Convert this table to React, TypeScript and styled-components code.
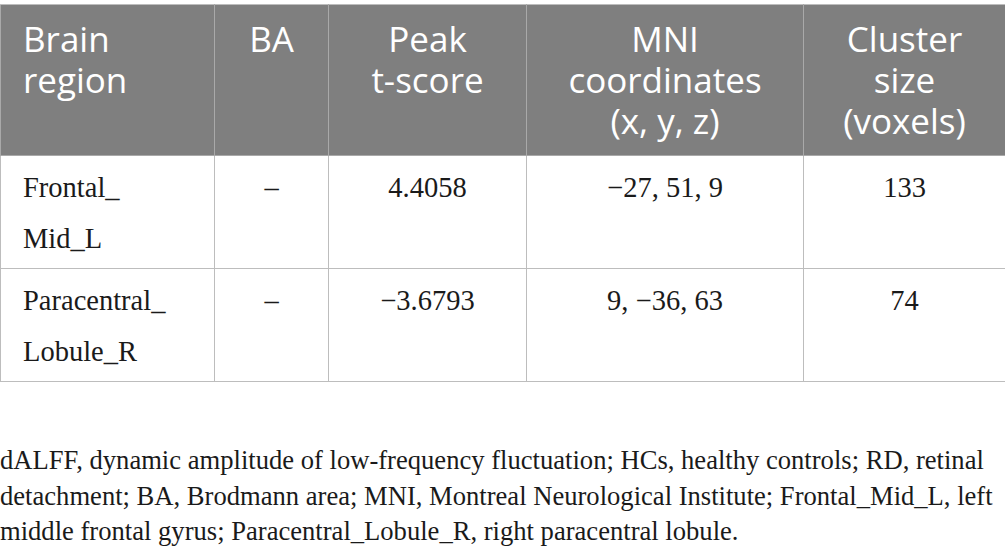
import React from 'react';
import styled, { createGlobalStyle } from 'styled-components';

const GlobalStyle = createGlobalStyle`
  html, body {
    margin: 0;
    padding: 0;
    background: #ffffff;
  }
`;

const Page = styled.div`
  width: 1005px;
  padding-top: 4px;
`;

const Table = styled.table`
  width: 1005px;
  border-collapse: collapse;
  table-layout: fixed;
  border: 1px solid #bdbdbd;
`;

const HeadCell = styled.th<{ $align?: 'left' | 'center' }>`
  background: #7f7f7f;
  color: #ffffff;
  font-family: 'Open Sans', 'Noto Sans', sans-serif;
  font-weight: 400;
  font-size: 35px;
  line-height: 41px;
  text-align: ${(p) => p.$align || 'center'};
  vertical-align: top;
  padding: 13px ${(p) => (p.$align === 'left' ? '10px 14px 22px' : '8px 14px 8px')};
  border: 1px solid #a9a9a9;
  border-top-color: #bdbdbd;
`;

const Cell = styled.td<{ $align?: 'left' | 'center' }>`
  font-family: 'Liberation Serif', 'Times New Roman', serif;
  font-size: 28.5px;
  line-height: 51px;
  color: #1a1a1a;
  text-align: ${(p) => p.$align || 'center'};
  vertical-align: top;
  padding: ${(p) => (p.$align === 'left' ? '6px 10px 4px 22px' : '6px 8px 4px')};
  border: 1px solid #bdbdbd;
  height: 102px;
`;

const Caption = styled.p`
  margin: 61px 0 0;
  font-family: 'Liberation Serif', 'Times New Roman', serif;
  font-size: 26.6px;
  line-height: 35.5px;
  color: #1a1a1a;
`;

const rows = [
  { region: ['Frontal_', 'Mid_L'], ba: '–', t: '4.4058', mni: '−27, 51, 9', size: '133' },
  { region: ['Paracentral_', 'Lobule_R'], ba: '–', t: '−3.6793', mni: '9, −36, 63', size: '74' },
];

const App = () => {
  return (
    <>
      <GlobalStyle />
      <Page>
        <Table>
          <colgroup>
            <col style={{ width: 214 }} />
            <col style={{ width: 114 }} />
            <col style={{ width: 198 }} />
            <col style={{ width: 277 }} />
            <col style={{ width: 202 }} />
          </colgroup>
          <thead>
            <tr>
              <HeadCell $align='left'>
                Brain
                <br />
                region
              </HeadCell>
              <HeadCell>BA</HeadCell>
              <HeadCell>
                Peak
                <br />
                t-score
              </HeadCell>
              <HeadCell>
                MNI
                <br />
                coordinates
                <br />
                (x, y, z)
              </HeadCell>
              <HeadCell>
                Cluster
                <br />
                size
                <br />
                (voxels)
              </HeadCell>
            </tr>
          </thead>
          <tbody>
            {rows.map((r) => (
              <tr key={r.t}>
                <Cell $align='left'>
                  {r.region[0]}
                  <br />
                  {r.region[1]}
                </Cell>
                <Cell>{r.ba}</Cell>
                <Cell>{r.t}</Cell>
                <Cell>{r.mni}</Cell>
                <Cell>{r.size}</Cell>
              </tr>
            ))}
          </tbody>
        </Table>
        <Caption>
          dALFF, dynamic amplitude of low-frequency fluctuation; HCs, healthy controls; RD, retinal detachment; BA,
          Brodmann area; MNI, Montreal Neurological Institute; Frontal_Mid_L, left middle frontal gyrus;
          Paracentral_Lobule_R, right paracentral lobule.
        </Caption>
      </Page>
    </>
  );
};

export default App;
